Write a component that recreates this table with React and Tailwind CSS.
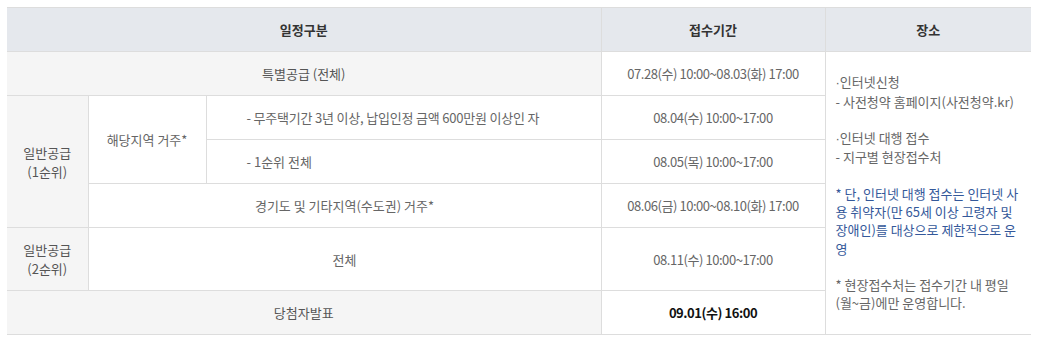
import React from 'react';

const cell = 'border border-[#dddddd] px-[10px] py-[12px] align-middle';
const date = `${cell} tracking-[-0.45px]`;

export default function App() {
  return (
    <div className="bg-white w-[1040px] h-[354px] pt-[7px] pl-[7px] font-['Noto_Sans_CJK_KR',sans-serif] text-[13px] leading-[19px] text-[#666]">
      <table className="w-[1024px] table-fixed border-collapse text-center">
        <colgroup>
          <col className="w-[81px]" />
          <col className="w-[118px]" />
          <col className="w-[395px]" />
          <col className="w-[224px]" />
          <col className="w-[206px]" />
        </colgroup>
        <thead>
          <tr className="bg-[#e5e8ed] text-[#333] font-bold">
            <th colSpan={3} className={`${cell} border-l-0`}>일정구분</th>
            <th className={cell}>접수기간</th>
            <th className={`${cell} border-r-0`}>장소</th>
          </tr>
        </thead>
        <tbody>
          <tr>
            <td colSpan={3} className={`${cell} border-l-0 bg-[#f5f5f5] text-[#555]`}>특별공급 (전체)</td>
            <td className={date}>07.28(수) 10:00~08.03(화) 17:00</td>
            <td rowSpan={6} className={`${cell} border-r-0 text-left px-[9px] leading-[18.25px]`}>
              <span className="font-['Liberation_Sans']">·</span>인터넷신청<br />
              - 사전청약 홈페이지(사전청약.kr)<br />
              <br />
              <span className="font-['Liberation_Sans']">·</span>인터넷 대행 접수<br />
              - 지구별 현장접수처<br />
              <br />
              <span className="text-[#34589a]">* 단, 인터넷 대행 접수는 인터넷 사용 취약자(만 65세 이상 고령자 및 장애인)를 대상으로 제한적으로 운영</span>
              <br />
              <br />
              * 현장접수처는 접수기간 내 평일 (월~금)에만 운영합니다.
            </td>
          </tr>
          <tr>
            <td rowSpan={3} className={`${cell} border-l-0 bg-[#f5f5f5] text-[#555] px-[4px]`}>
              일반공급<br />(1순위)
            </td>
            <td rowSpan={2} className={cell}>해당지역 거주*</td>
            <td className={`${cell} text-left pl-[40px] tracking-[-0.2px]`}>- 무주택기간 3년 이상, 납입인정 금액 600만원 이상인 자</td>
            <td className={date}>08.04(수) 10:00~17:00</td>
          </tr>
          <tr>
            <td className={`${cell} text-left pl-[40px]`}>- 1순위 전체</td>
            <td className={date}>08.05(목) 10:00~17:00</td>
          </tr>
          <tr>
            <td colSpan={2} className={cell}>경기도 및 기타지역(수도권) 거주*</td>
            <td className={date}>08.06(금) 10:00~08.10(화) 17:00</td>
          </tr>
          <tr>
            <td className={`${cell} border-l-0 bg-[#f5f5f5] text-[#555] px-[4px]`}>
              일반공급<br />(2순위)
            </td>
            <td colSpan={2} className={cell}>전체</td>
            <td className={date}>08.11(수) 10:00~17:00</td>
          </tr>
          <tr>
            <td colSpan={3} className={`${cell} border-l-0 bg-[#f5f5f5] text-[#555]`}>당첨자발표</td>
            <td className={`${date} font-bold text-[#111]`}>09.01(수) 16:00</td>
          </tr>
        </tbody>
      </table>
    </div>
  );
}
